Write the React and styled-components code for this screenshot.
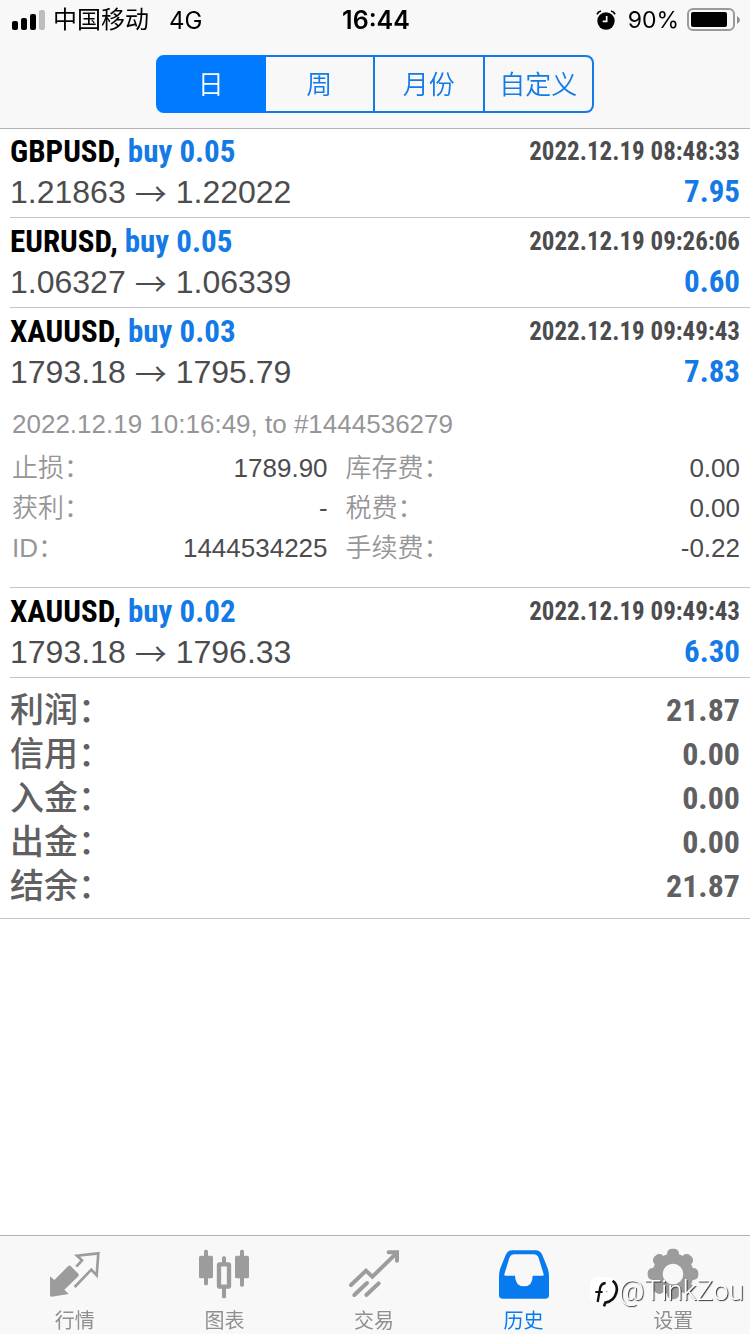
import { useState } from "react";
import styled, { createGlobalStyle } from "styled-components";

const periods = ["日", "周", "月份", "自定义"];

const deals = [
    {
        id: "1444534101",
        symbol: "GBPUSD",
        volume: "0.05",
        open: "1.21863",
        close: "1.22022",
        time: "2022.12.19 08:48:33",
        profit: "7.95",
    },
    {
        id: "1444534187",
        symbol: "EURUSD",
        volume: "0.05",
        open: "1.06327",
        close: "1.06339",
        time: "2022.12.19 09:26:06",
        profit: "0.60",
    },
    {
        id: "1444534225",
        symbol: "XAUUSD",
        volume: "0.03",
        open: "1793.18",
        close: "1795.79",
        time: "2022.12.19 09:49:43",
        profit: "7.83",
        note: "2022.12.19 10:16:49, to #1444536279",
        details: [
            ["止损：", "1789.90"],
            ["库存费：", "0.00"],
            ["获利：", "-"],
            ["税费：", "0.00"],
            ["ID：", "1444534225"],
            ["手续费：", "-0.22"],
        ],
    },
    {
        id: "1444534226",
        symbol: "XAUUSD",
        volume: "0.02",
        open: "1793.18",
        close: "1796.33",
        time: "2022.12.19 09:49:43",
        profit: "6.30",
    },
];

const totals = [
    ["利润：", "21.87"],
    ["信用：", "0.00"],
    ["入金：", "0.00"],
    ["出金：", "0.00"],
    ["结余：", "21.87"],
];

const tabs = [
    { label: "行情", Icon: QuotesIcon },
    { label: "图表", Icon: ChartIcon },
    { label: "交易", Icon: TradeIcon },
    { label: "历史", Icon: HistoryIcon },
    { label: "设置", Icon: SettingsIcon },
];

export default function App(){
    const [period, setPeriod] = useState("日");
    const [tab, setTab] = useState("历史");
    const [openDeal, setOpenDeal] = useState("1444534225");

    function toggleDeal(id){
        setOpenDeal(openDeal === id ? null : id);
    }

    return(
        <Page>
            <GlobalStyle />
            <Header>
                <StatusBar />
                <Segments>
                    {periods.map((name) => (
                        <Segment
                            key={name}
                            type="button"
                            aria-pressed={period === name}
                            $active={period === name}
                            onClick={() => setPeriod(name)}
                        >
                            {name}
                        </Segment>
                    ))}
                </Segments>
            </Header>
            <Main>
                <DealList>
                    {deals.map((deal) => (
                        <Deal
                            key={deal.id}
                            deal={deal}
                            isOpen={openDeal === deal.id}
                            onToggle={() => toggleDeal(deal.id)}
                        />
                    ))}
                </DealList>
                <Totals>
                    {totals.map(([label, value]) => (
                        <TotalRow key={label}>
                            <dt>{label}</dt>
                            <TotalValue>{value}</TotalValue>
                        </TotalRow>
                    ))}
                </Totals>
            </Main>
            <TabBar>
                {tabs.map(({ label, Icon }) => (
                    <Tab
                        key={label}
                        type="button"
                        $active={tab === label}
                        onClick={() => setTab(label)}
                    >
                        <Icon $active={tab === label} />
                        {label}
                    </Tab>
                ))}
                <Watermark>
                    <WatermarkLogo />
                    @TinkZou
                </Watermark>
            </TabBar>
        </Page>
    );
}

function StatusBar(){
    return(
        <Status>
            <StatusSide>
                <SignalIcon />
                <Carrier>中国移动</Carrier>
                <span>4G</span>
            </StatusSide>
            <Clock>16:44</Clock>
            <StatusSide $end>
                <AlarmIcon />
                <Charge>90%</Charge>
                <BatteryIcon />
            </StatusSide>
        </Status>
    );
}

function Deal({ deal, isOpen, onToggle }){
    return(
        <DealItem>
            <DealButton type="button" aria-expanded={isOpen} onClick={onToggle}>
                <DealLine>
                    <Title>
                        <Symbol>{deal.symbol},</Symbol>
                        <Volume>buy {deal.volume}</Volume>
                    </Title>
                    <Time>{deal.time}</Time>
                </DealLine>
                <DealLine>
                    <Price>
                        <span>{deal.open}</span>
                        <Arrow>→</Arrow>
                        <span>{deal.close}</span>
                    </Price>
                    <Profit>{deal.profit}</Profit>
                </DealLine>
            </DealButton>
            {isOpen && deal.details && (
                <Details>
                    <Note>{deal.note}</Note>
                    <DetailGrid>
                        {deal.details.map(([label, value]) => (
                            <DetailRow key={label}>
                                <DetailLabel>{label}</DetailLabel>
                                <DetailValue>{value}</DetailValue>
                            </DetailRow>
                        ))}
                    </DetailGrid>
                </Details>
            )}
        </DealItem>
    );
}

function SignalIcon(){
    return(
        <svg width="34" height="20" viewBox="0 0 34 20" aria-hidden="true">
            <rect x="0" y="11" width="6" height="9" rx="2" />
            <rect x="9" y="8" width="6" height="12" rx="2" />
            <rect x="18" y="4" width="6" height="16" rx="2" />
            <rect x="27" y="0" width="6" height="20" rx="2" fill="#bdbdbd" />
        </svg>
    );
}

function AlarmIcon(){
    return(
        <svg width="20" height="20" viewBox="0 0 60 60" aria-hidden="true">
            <circle cx="30" cy="33" r="26" />
            <path d="M3 13Q6 5 15 3M45 3Q54 5 57 13" fill="none" stroke="#000" strokeWidth="5" />
            <path d="M32 18V34H20" fill="none" stroke="#f8f8f8" strokeWidth="5" />
        </svg>
    );
}

function BatteryIcon(){
    return(
        <svg width="53" height="24" viewBox="0 0 53 24" aria-hidden="true">
            <rect x="1" y="1" width="46" height="21" rx="5" fill="none" stroke="#9a9a9a" strokeWidth="2" />
            <rect x="4" y="4" width="36" height="15" rx="2" />
            <path d="M50 8Q53 10 53 12Q53 14 50 16Z" fill="#8e8e8e" />
        </svg>
    );
}

function QuotesIcon({ $active }){
    return(
        <TabIcon $active={$active} viewBox="0 0 150 150" aria-hidden="true">
            <path d="M0 82L13 93L54 52Q58 48 62 51L85 74Q88 78 85 82L43 122L56 135L5 143Q0 143 0 138Z" fill="currentColor" />
            <path d="M79 53L96 34L81 20L145 13L140 79L124 62L74 114" fill="none" stroke="currentColor" strokeWidth="8" />
        </TabIcon>
    );
}

function ChartIcon({ $active }){
    return(
        <TabIcon $active={$active} viewBox="0 0 150 150" aria-hidden="true">
            <g fill="currentColor">
                <rect x="0" y="20" width="42" height="68" rx="5" />
                <rect x="15" y="2" width="12" height="107" rx="5" />
                <rect x="108" y="20" width="42" height="68" rx="5" />
                <rect x="123" y="2" width="12" height="111" rx="5" />
                <rect x="69" y="22" width="12" height="24" rx="5" />
                <rect x="69" y="112" width="12" height="36" rx="5" />
            </g>
            <rect x="60" y="46" width="30" height="67" rx="2" fill="none" stroke="currentColor" strokeWidth="13" />
        </TabIcon>
    );
}

function TradeIcon({ $active }){
    return(
        <TabIcon $active={$active} viewBox="0 0 150 150" aria-hidden="true">
            <g fill="none" stroke="currentColor" strokeWidth="12" strokeLinecap="round">
                <path d="M6 108L51 65L70 83L142 13" />
                <path d="M119 10H144V35" />
                <path d="M16 138L54 102M52 138L89 103" />
            </g>
        </TabIcon>
    );
}

function HistoryIcon({ $active }){
    return(
        <TabIcon $active={$active} viewBox="0 0 150 150" aria-hidden="true">
            <path
                fill="currentColor"
                fillRule="evenodd"
                d="M0 80Q0 70 4 58L20 18Q26 4 40 4H110Q124 4 130 18L146 58Q150 70 150 80V139Q150 149 140 149H10Q0 149 0 139ZM16 76L31 27Q35 16 46 16H104Q115 16 119 27L134 76Q135 80 130 80H101Q101 112 75 112Q49 112 48 80H20Q15 80 16 76Z"
            />
        </TabIcon>
    );
}

function SettingsIcon({ $active }){
    return(
        <TabIcon $active={$active} viewBox="0 0 150 150" aria-hidden="true">
            <g fill="currentColor">
                <circle cx="75" cy="75" r="62" />
                {[0, 45, 90, 135].map((angle) => (
                    <rect
                        key={angle}
                        x="57"
                        y="-1"
                        width="36"
                        height="152"
                        rx="15"
                        transform={`rotate(${angle} 75 75)`}
                    />
                ))}
            </g>
            <circle cx="75" cy="75" r="31" fill="#f8f8f8" />
        </TabIcon>
    );
}

function WatermarkLogo(){
    return(
        <svg width="29" height="31" viewBox="0 0 87 93" aria-hidden="true">
            <rect x="0" y="4" width="78" height="74" rx="22" fill="#fff" />
            <path d="M23 78L30 38Q33 22 47 21" fill="none" stroke="#111" strokeWidth="7" />
            <path d="M16 48H38" fill="none" stroke="#111" strokeWidth="6" />
            <path d="M68 14Q85 28 79 50Q72 76 46 80L42 91" fill="none" stroke="#111" strokeWidth="8" />
            <circle cx="50" cy="46" r="2" fill="#777" />
        </svg>
    );
}

const GlobalStyle = createGlobalStyle`
    * {
        box-sizing: border-box;
    }

    body {
        margin: 0;
        background-color: #FFF;
        font-family: "Liberation Sans", "Noto Sans CJK SC", sans-serif;
    }

    button {
        padding: 0;
        border: none;
        background: none;
        font-family: inherit;
        cursor: pointer;
    }

    dl, dd, p, ul {
        margin: 0;
        padding: 0;
    }

    svg {
        flex-shrink: 0;
    }
`;

const Page = styled.div`
    display: flex;
    flex-direction: column;
    min-height: 100vh;
`;

const Header = styled.header`
    display: flex;
    flex-direction: column;
    align-items: center;
    padding-bottom: 15px;
    background-color: #F8F8F8;
    box-shadow: 0 1px 0 #B4B4B4;
    z-index: 1;
`;

const Status = styled.div`
    display: grid;
    grid-template-columns: 1fr auto 1fr;
    align-items: center;
    width: 100%;
    height: 40px;
    padding: 0 10px 0 12px;
    margin-bottom: 15px;
    font-family: Inter, "Noto Sans CJK SC", sans-serif;
    font-size: 24px;
    color: #000;
`;

const StatusSide = styled.div`
    display: flex;
    align-items: center;
    justify-content: ${({$end}) => $end ? "flex-end" : "flex-start"};
`;

const Carrier = styled.span`
    margin: 0 20px 0 7px;
    line-height: 32px;
`;

const Clock = styled.time`
    font-size: 25px;
    font-weight: 600;
`;

const Charge = styled.span`
    margin: 0 8px 0 12px;
    font-size: 23px;
`;

const Segments = styled.div`
    display: grid;
    grid-template-columns: repeat(4, 1fr);
    width: 100%;
    max-width: 438px;
    height: 58px;
`;

const Segment = styled.button`
    padding-bottom: 4px;
    border: 2px solid ${({$active}) => $active ? "#007AFF" : "#147AE6"};
    border-left-width: 0;
    font-size: 26px;
    font-weight: 350;
    color: ${({$active}) => $active ? "#FFF" : "#147AE6"};
    background-color: ${({$active}) => $active ? "#007AFF" : "transparent"};

    &:first-child {
        border-left-width: 2px;
        border-radius: 8px 0 0 8px;
    }

    &:last-child {
        border-radius: 0 8px 8px 0;
    }
`;

const Main = styled.main`
    flex: 1;
`;

const DealList = styled.ul`
    padding-left: 10px;
    list-style: none;
`;

const DealItem = styled.li`
    border-bottom: 1px solid #C4C4C6;
`;

const DealButton = styled.button`
    display: block;
    width: 100%;
    padding: 4px 10px 5px 0;
    text-align: left;
`;

const DealLine = styled.span`
    display: flex;
    justify-content: space-between;
    line-height: 40px;
    white-space: nowrap;
`;

const Narrow = styled.span`
    font-family: "Roboto Condensed", "Open Sans Condensed", sans-serif;
    font-weight: 700;
`;

const Title = styled(Narrow)`
    display: flex;
    gap: 7px;
    height: 40px;
    font-size: 31px;
`;

const Symbol = styled.span`
    color: #000;
`;

const Volume = styled.span`
    color: #147AE6;
`;

const Time = styled(Narrow)`
    height: 40px;
    font-size: 25px;
    color: #4C4C4E;
`;

const Price = styled.span`
    display: flex;
    gap: 9px;
    height: 40px;
    font-size: 32px;
    color: #4C4C4E;
`;

const Arrow = styled.span`
    font-family: "Noto Sans CJK SC", sans-serif;
    font-weight: 350;
`;

const Profit = styled(Narrow)`
    height: 40px;
    font-size: 31px;
    color: #147AE6;
`;

const Details = styled.div`
    padding: 7px 10px 19px 2px;
    font-size: 26px;
    line-height: 40px;
    color: #969698;
`;

const Note = styled.p`
    margin-bottom: 4px;
`;

const DetailGrid = styled.dl`
    display: grid;
    grid-template-columns: 4fr 5fr;
    column-gap: 18px;
`;

const DetailRow = styled.div`
    display: flex;
    justify-content: space-between;
    height: 40px;
`;

const DetailLabel = styled.dt`
    font-weight: 350;
`;

const DetailValue = styled.dd`
    color: #4C4C4E;
`;

const Totals = styled.dl`
    padding: 10px;
    border-bottom: 1px solid #C4C4C6;
    color: #606062;
`;

const TotalRow = styled.div`
    display: flex;
    justify-content: space-between;
    height: 44px;
    font-size: 34px;
    font-weight: 500;
    line-height: 44px;
`;

const TotalValue = styled(Narrow).attrs({ as: "dd" })`
    font-size: 32px;
`;

const TabBar = styled.nav`
    position: sticky;
    bottom: 0;
    display: grid;
    grid-template-columns: repeat(5, 1fr);
    height: 99px;
    padding-right: 2px;
    border-top: 1px solid #B0B0B0;
    background-color: #F8F8F8;
`;

const Tab = styled.button`
    display: flex;
    flex-direction: column;
    align-items: center;
    gap: 8px;
    padding-top: 13px;
    font-size: 20px;
    line-height: 28px;
    color: ${({$active}) => $active ? "#087AF0" : "#8F8F8F"};
`;

const TabIcon = styled.svg`
    width: 50px;
    height: 50px;
    overflow: visible;
    color: ${({$active}) => $active ? "#087AF0" : "#9C9C9C"};
`;

/* sits over the last tab */
const Watermark = styled.div`
    position: absolute;
    right: 6px;
    bottom: 27px;
    display: flex;
    align-items: center;
    font-family: Roboto, sans-serif;
    font-size: 28px;
    font-weight: 300;
    line-height: 32px;
    color: #FFF;
    text-shadow: 1px 1px 1px #333;
    pointer-events: none;
`;
